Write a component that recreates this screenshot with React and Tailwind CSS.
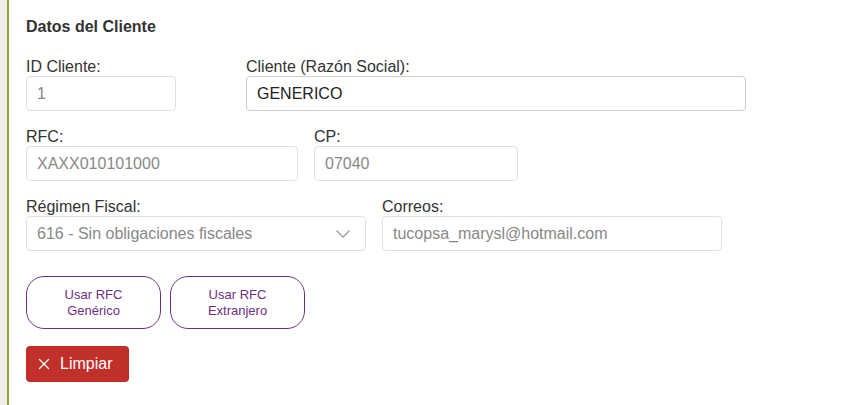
import { ChevronDown, X } from "lucide-react";

const font = { fontFamily: '"Liberation Sans", Arial, sans-serif' };

function Field({ label, value, width, strong = false }) {
  return (
    <div className="flex flex-col" style={{ width }}>
      <label className="h-[18px] text-[16px] leading-[18px] text-[#333]">{label}</label>
      <div
        className={
          "flex h-[35px] items-center rounded-[4px] border bg-white px-[10px] text-[16px] " +
          (strong ? "border-[#cfcfcf] text-[#222]" : "border-[#e0e0e0] text-[#888]")
        }
      >
        {value}
      </div>
    </div>
  );
}

function SelectField({ label, value, width }) {
  return (
    <div className="flex flex-col" style={{ width }}>
      <label className="h-[18px] text-[16px] leading-[18px] text-[#333]">{label}</label>
      <div className="flex h-[35px] items-center justify-between rounded-[4px] border border-[#e0e0e0] bg-white pl-[10px] pr-[10px] text-[16px] text-[#888]">
        <span>{value}</span>
        <ChevronDown size={24} strokeWidth={1.25} className="text-[#999]" />
      </div>
    </div>
  );
}

export default function App() {
  return (
    <div className="flex h-[405px] w-[848px] bg-white" style={font}>
      <div className="w-[7px] bg-[#efeee9]" />
      <div className="w-[2px] bg-[#98a03c]" />
      <div className="flex flex-1 flex-col pl-[17px] pt-[18px]">
        <h2 className="text-[16px] font-bold leading-[18px] text-[#333]">Datos del Cliente</h2>

        <div className="mt-[22px] flex gap-[70px]">
          <Field label="ID Cliente:" value="1" width={150} />
          <Field label="Cliente (Razón Social):" value="GENERICO" width={500} strong />
        </div>

        <div className="mt-[17px] flex gap-[16px]">
          <Field label="RFC:" value="XAXX010101000" width={272} />
          <Field label="CP:" value="07040" width={204} />
        </div>

        <div className="mt-[17px] flex gap-[16px]">
          <SelectField label="Régimen Fiscal:" value="616 - Sin obligaciones fiscales" width={340} />
          <Field label="Correos:" value="tucopsa_marysl@hotmail.com" width={340} />
        </div>

        <div className="mt-[25px] flex gap-[9px]">
          <button className="flex h-[53px] w-[135px] flex-col items-center justify-center rounded-[18px] border border-[#6e2f82] bg-white text-[13px] leading-[16px] text-[#6e2f82]">
            <span>Usar RFC</span>
            <span>Genérico</span>
          </button>
          <button className="flex h-[53px] w-[135px] flex-col items-center justify-center rounded-[18px] border border-[#6e2f82] bg-white text-[13px] leading-[16px] text-[#6e2f82]">
            <span>Usar RFC</span>
            <span>Extranjero</span>
          </button>
        </div>

        <div className="mt-[17px]">
          <button className="flex h-[36px] w-[103px] items-center gap-[7px] rounded-[4px] bg-[#c12f2b] pl-[9px] text-[16px] text-white">
            <X size={18} strokeWidth={1.75} />
            <span>Limpiar</span>
          </button>
        </div>
      </div>
    </div>
  );
}
